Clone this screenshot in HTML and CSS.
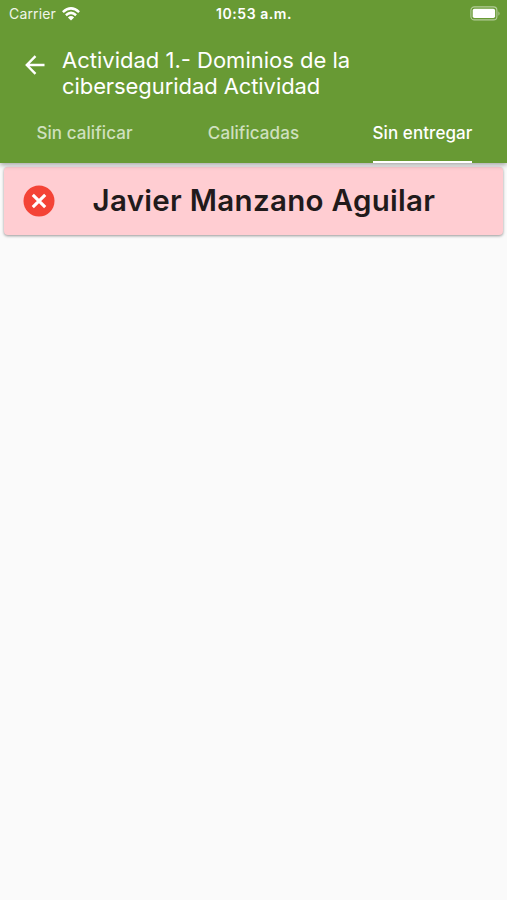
FILE: index.html
```html
<!DOCTYPE html>
<html lang="es">
<head>
<meta charset="utf-8">
<meta name="viewport" content="width=device-width, initial-scale=1">
<title>Actividad 1</title>
<link rel="stylesheet" href="styles.css">
</head>
<body>
<header class="app-bar">
  <div class="status">
    <div class="carrier"><span>Carrier</span>
      <svg class="wifi" viewBox="0 0 18 14" fill="none" stroke="#fff" stroke-width="2.5"><path d="M.9 5.1Q9-2.4 17.1 5.1M3.9 8.2Q9 3.6 14.1 8.2"/><path d="M5.9 10.4Q9 7.8 12.1 10.4L9 13.5Z" fill="#fff" stroke="none"/></svg>
    </div>
    <time class="clock">10:53 a.m.</time>
    <svg class="battery" viewBox="0 0 31 15"><rect x=".9" y=".9" width="26" height="13" rx="3.5" fill="none" stroke="#fff" stroke-opacity=".5" stroke-width="1.1"/><rect x="2.7" y="2.7" width="22.4" height="9.4" rx="1.8" fill="#fff"/><path d="M28.5 5.2q2 2.3 0 4.6z" fill="#fff" fill-opacity=".55"/></svg>
  </div>
  <div class="toolbar">
    <svg class="back" viewBox="0 0 20 20" fill="none" stroke="#fff" stroke-width="2.4"><path d="M19.5 10H2M10.5 1.2L1.8 10L10.5 18.8"/></svg>
    <h1 class="title">Actividad 1.- Dominios de la<br><span class="title-rest">ciberseguridad Actividad</span></h1>
  </div>
  <nav class="tabs">
    <span class="tab">Sin calificar</span>
    <span class="tab">Calificadas</span>
    <span class="tab active">Sin entregar</span>
  </nav>
</header>
<main>
  <article class="card">
    <svg class="error" viewBox="0 0 32 32"><circle cx="16" cy="16" r="15.5" fill="#f44336"/><path d="M9.8 9.8l12.4 12.4M22.2 9.8L9.8 22.2" stroke="#fff" stroke-width="3.1"/></svg>
    <span class="name">Javier Manzano Aguilar</span>
  </article>
</main>
</body>
</html>
```

FILE: styles.css
```css
* { box-sizing: border-box; }
body {
  margin: 0;
  min-height: 100vh;
  background: #fafafa;
  font-family: Inter, "Liberation Sans", sans-serif;
}
.app-bar {
  position: relative;
  z-index: 1;
  height: 163px;
  background: #689a34;
  color: #fff;
  box-shadow: 0 2px 5px rgba(0, 0, 0, .35);
}
.status {
  height: 27px;
  padding: 0 6px 0 9px;
  display: grid;
  grid-template-columns: 1fr auto 1fr;
  align-items: center;
}
.carrier {
  display: flex;
  align-items: center;
  gap: 6px;
  font-size: 14px;
  letter-spacing: .15px;
  color: #f0f5ea;
}
.wifi { width: 18px; height: 14px; }
.clock { margin-left: -2px; font-size: 14px; font-weight: 600; letter-spacing: .55px; }
.battery { width: 31px; height: 15px; justify-self: end; }
.toolbar {
  height: 76px;
  padding: 20px 0 0 25px;
  display: flex;
  gap: 17px;
}
.back { width: 20px; height: 20px; margin-top: 8px; }
.title {
  margin: 0;
  font-size: 22px;
  line-height: 26px;
  font-weight: 400;
  white-space: nowrap;
}
.title-rest { letter-spacing: -.08px; }
.tabs {
  height: 60px;
  display: grid;
  grid-template-columns: repeat(3, 1fr);
  justify-items: center;
}
.tab {
  height: 60px;
  line-height: 60px;
  font-size: 17px;
  font-weight: 500;
  letter-spacing: .08px;
  color: #cfe0bf;
  white-space: nowrap;
}
.tab.active { color: #fff; border-bottom: 2px solid #fff; }
.card {
  height: 68px;
  margin: 4px 4px 0;
  padding-left: 19px;
  display: flex;
  align-items: center;
  gap: 37.5px;
  border-radius: 4px;
  background: #ffcdd2;
  box-shadow: 0 1px 3px rgba(0, 0, 0, .4);
}
.error { width: 32px; height: 32px; }
.name {
  padding-bottom: 2px;
  font-size: 29.5px;
  font-weight: 600;
  letter-spacing: .31px;
  color: #211a1b;
  white-space: nowrap;
}
```
